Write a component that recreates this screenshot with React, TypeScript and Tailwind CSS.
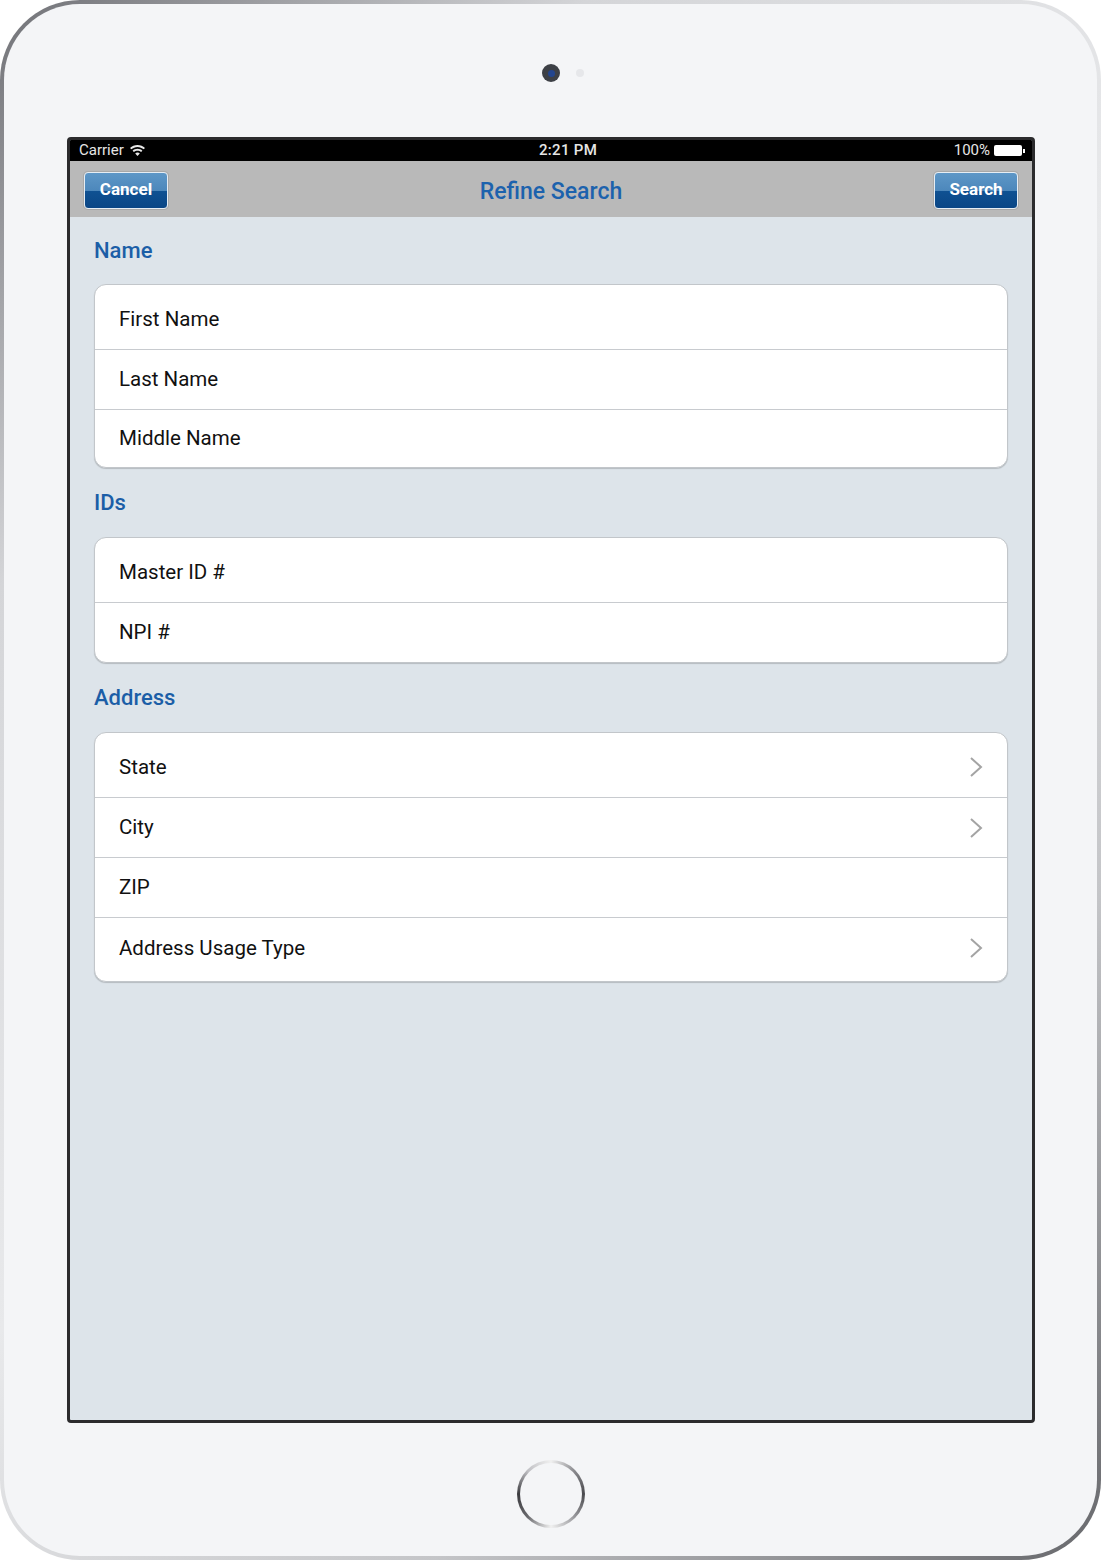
import React from 'react';

type Row = { label: string; h: string; chevron?: boolean };

const sections: { title: string; headH: string; rows: Row[] }[] = [
    {
        title: 'Name',
        headH: 'h-[67px]',
        rows: [
            { label: 'First Name', h: 'h-[64px] pt-[4px]' },
            { label: 'Last Name', h: 'h-[60px]' },
            { label: 'Middle Name', h: 'h-[58px]' },
        ],
    },
    {
        title: 'IDs',
        headH: 'h-[69px]',
        rows: [
            { label: 'Master ID #', h: 'h-[64px] pt-[4px]' },
            { label: 'NPI #', h: 'h-[60px]' },
        ],
    },
    {
        title: 'Address',
        headH: 'h-[69px]',
        rows: [
            { label: 'State', h: 'h-[64px] pt-[4px]', chevron: true },
            { label: 'City', h: 'h-[60px]', chevron: true },
            { label: 'ZIP', h: 'h-[60px]' },
            { label: 'Address Usage Type', h: 'h-[64px] pb-[3px]', chevron: true },
        ],
    },
];

const Chevron = () => (
    <svg width="17" height="22" viewBox="0 0 17 22" fill="none" stroke="#a4a4a4" strokeWidth="2">
        <path d="M3 2l10 9-10 9" />
    </svg>
);

const Wifi = () => (
    <svg width="15" height="12" viewBox="0 0 15 12" fill="#e8e8e8">
        <path d="M7.5 0C4.6 0 2 1.1 0 2.9l1.3 1.4C3 2.8 5.1 1.9 7.5 1.9s4.5.9 6.2 2.4L15 2.9C13 1.1 10.4 0 7.5 0z" />
        <path d="M7.5 3.8c-1.9 0-3.6.7-4.9 1.9l1.3 1.4c1-.9 2.2-1.4 3.6-1.4s2.6.5 3.6 1.4l1.3-1.4c-1.3-1.2-3-1.9-4.9-1.9z" />
        <path d="M7.5 7.6c-.9 0-1.7.3-2.3.9L7.5 11l2.3-2.5c-.6-.6-1.4-.9-2.3-.9z" />
    </svg>
);

const NavButton = ({ label }: { label: string }) => (
    <button className="h-[37px] w-[84px] rounded-[4px] border border-[#e6edf4] bg-[linear-gradient(to_bottom,#5e97c7_0%,#4c87bb_52%,#0f5192_52%,#0a4686_100%)] text-white text-[17px] font-bold shadow-[0_0_0_1px_rgba(120,120,120,0.25)]">
        {label}
    </button>
);

export default function App() {
    return (
        <div className="w-[1101px] h-[1560px] bg-white font-['Roboto','Liberation_Sans',sans-serif]">
            <div className="w-full h-full rounded-[80px] p-[4px] bg-[linear-gradient(135deg,#707176_0%,#d4d5d8_22%,#e8e9eb_50%,#c4c5c8_75%,#66676b_100%)]">
                <div className="w-full h-full rounded-[76px] bg-[#f4f5f7] flex flex-col items-center relative">
                    {/* camera */}
                    <div className="absolute left-[538px] top-[60px] flex items-center gap-[16px]">
                        <div className="w-[18px] h-[18px] rounded-full bg-[#3d4046] flex items-center justify-center">
                            <div className="w-[7px] h-[7px] rounded-full bg-[#23458e]" />
                        </div>
                        <div className="w-[8px] h-[8px] rounded-full bg-[#e6e7ea]" />
                    </div>

                    <div className="mt-[133px] ml-[1px] w-[968px] h-[1286px] border-[3px] border-[#2b2b2d] rounded-[4px] bg-[#dde4ea] flex flex-col overflow-hidden">
                        {/* status bar */}
                        <div className="h-[21px] bg-black flex items-center pl-[9px] pr-[7px] text-[15px] text-[#e6e6e6] relative shrink-0">
                            <span className="flex items-center gap-[6px]">Carrier <Wifi /></span>
                            <span className="absolute left-[469px] font-medium tracking-[0.3px]">2:21 PM</span>
                            <span className="ml-auto flex items-center gap-[4px]">
                                100%
                                <span className="flex items-center">
                                    <span className="w-[28px] h-[11px] bg-white rounded-[2px]" />
                                    <span className="w-[2px] h-[4px] bg-white ml-[1px]" />
                                </span>
                            </span>
                        </div>

                        {/* nav bar */}
                        <div className="h-[56px] bg-[#b9b9b9] flex items-center justify-between px-[14px] pt-[2px] shrink-0 relative">
                            <NavButton label="Cancel" />
                            <span className="absolute left-0 right-0 text-center text-[23px] font-medium text-[#1c62ad] pointer-events-none pt-[4px]">Refine Search</span>
                            <NavButton label="Search" />
                        </div>

                        {/* form */}
                        <div className="pl-[24px] pr-[24px]">
                            {sections.map(section => (
                                <div key={section.title}>
                                    <div className={`${section.headH} flex items-center text-[22px] font-medium text-[#1b5ea7]`}>
                                        {section.title}
                                    </div>
                                    <div className="bg-white rounded-[12px] border border-[#c2c6ca] shadow-[0_1px_1px_rgba(0,0,0,0.18)] overflow-hidden">
                                        {section.rows.map((row, i) => (
                                            <div
                                                key={row.label}
                                                className={`${row.h} flex items-center pl-[24px] pr-[22px] text-[20.5px] text-[#111111] ${i > 0 ? 'border-t border-[#c8cbcf]' : ''}`}
                                            >
                                                <span>{row.label}</span>
                                                {row.chevron && <span className="ml-auto flex"><Chevron /></span>}
                                            </div>
                                        ))}
                                    </div>
                                </div>
                            ))}
                        </div>
                    </div>

                    {/* home button */}
                    <div className="mt-[37px] w-[68px] h-[68px] rounded-full p-[3px] bg-[conic-gradient(from_0deg,#f0f0f0,#8a8a8e,#4a4a4e,#9a9a9e,#f0f0f0,#6a6a6e,#3a3a3e,#c0c0c4,#f0f0f0)]">
                        <div className="w-full h-full rounded-full bg-[#f4f5f7]" />
                    </div>
                </div>
            </div>
        </div>
    );
}
